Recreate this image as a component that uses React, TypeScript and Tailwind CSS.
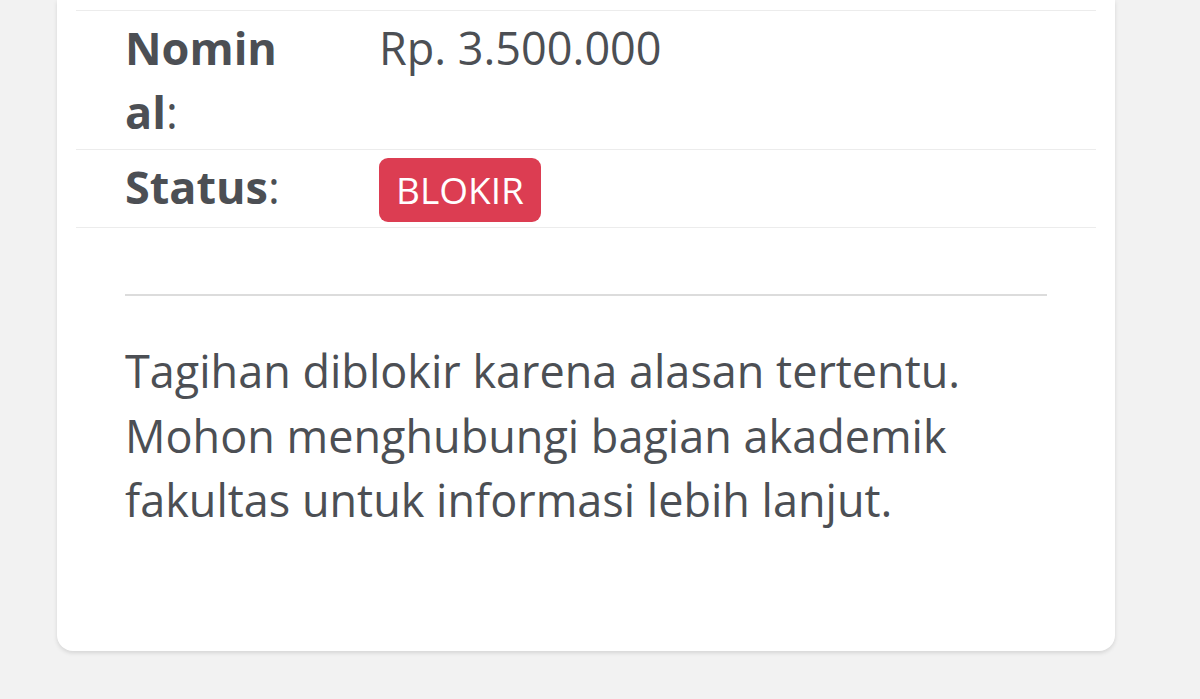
import React from "react";

const rows = [
  { label: "Nominal", value: <span>Rp. 3.500.000</span> },
  {
    label: "Status",
    value: (
      <span className="mt-[1px] inline-block rounded-[9px] bg-[#dc3d52] px-[17px] text-[37px] leading-[64px] text-white">
        BLOKIR
      </span>
    ),
  },
];

export default function App() {
  return (
    <div className="min-h-[699px] bg-[#f2f2f2] font-['Open_Sans',sans-serif] text-[#4c4f54]">
      <div className="mx-[57px] w-[1058px] rounded-b-[16px] bg-white pt-[10px] pb-[118px] shadow-[0_2px_4px_rgba(0,0,0,0.12)]">
        <div className="mx-[19px]">
          {rows.map((r) => (
            <div
              key={r.label}
              className="flex items-start border-t border-[#ececec] pt-[5px] pb-[5px] text-[45px] leading-[64px] last:border-b"
            >
              <div className="ml-[49px] w-[164px] break-all">
                <b>{r.label}</b>:
              </div>
              <div className="ml-[90px]">{r.value}</div>
            </div>
          ))}
        </div>
        <div className="mx-[68px] mt-[66px] border-t-2 border-[#dcdcdc]" />
        <p className="mx-[68px] mt-[43px] text-[45px] leading-[64.5px]">
          Tagihan diblokir karena alasan tertentu. Mohon menghubungi bagian
          akademik fakultas untuk informasi lebih lanjut.
        </p>
      </div>
    </div>
  );
}
